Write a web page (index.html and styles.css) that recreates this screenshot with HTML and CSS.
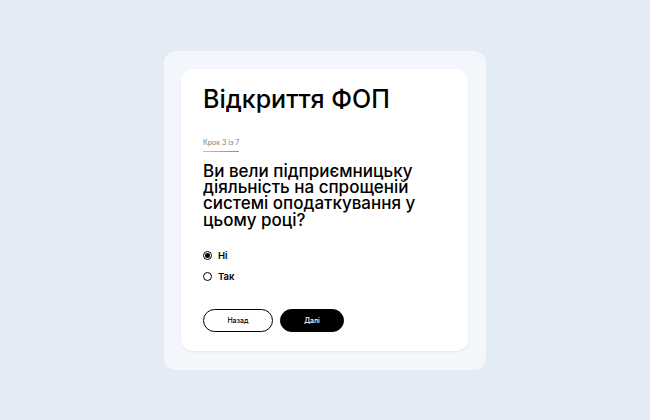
FILE: index.html
```html
<!DOCTYPE html>
<html lang="uk">
<head>
<meta charset="utf-8">
<link rel="stylesheet" href="styles.css">
</head>
<body>
<div class="page">
  <div class="panel">
    <div class="card">
      <h1 class="title">Відкриття ФОП</h1>
      <div class="step">Крок 3 із 7</div>
      <h2 class="question">Ви вели підприємницьку діяльність на спрощеній системі оподаткування у цьому році?</h2>
      <div class="options">
        <label class="option"><span class="radio checked"></span><span class="opt-label">Ні</span></label>
        <label class="option"><span class="radio"></span><span class="opt-label">Так</span></label>
      </div>
      <div class="actions">
        <button class="btn btn-outline">Назад</button>
        <button class="btn btn-solid">Далі</button>
      </div>
    </div>
  </div>
</div>
</body>
</html>
```
FILE: styles.css
```css
* { box-sizing: border-box; }
html, body { margin: 0; padding: 0; }
body {
  background: #e3ebf5;
  font-family: "Inter", "Noto Sans", sans-serif;
  color: #000;
}
.page {
  width: 650px;
  height: 420px;
  display: flex;
  align-items: center;
  justify-content: center;
}
.panel {
  width: 322px;
  height: 319px;
  background: #f3f6fb;
  border-radius: 12px;
  padding: 18px 18px 19px 17px;
}
.card {
  width: 287px;
  height: 282px;
  background: #fff;
  border-radius: 12px;
  box-shadow: 0 1px 2px rgba(30, 50, 90, 0.08);
  padding: 14px 22px 0 22px;
  display: flex;
  flex-direction: column;
}
.title {
  margin: 0;
  font-size: 25px;
  font-weight: 500;
  line-height: 32px;
  letter-spacing: 0;
}
.step {
  margin-top: 23px;
  font-size: 7px;
  color: #7a7a7a;
  line-height: 10px;
  padding-bottom: 4px;
  width: 36px;
  white-space: nowrap;
  background: linear-gradient(90deg, #9ad6cc, #62b6c4 60%, #6a9ad8) no-repeat left bottom / 100% 1px;
}
.question {
  margin: 11px 0 0 0;
  font-size: 17px;
  font-weight: 500;
  line-height: 16.4px;
}
.options {
  margin-top: 22px;
  display: flex;
  flex-direction: column;
  gap: 11px;
}
.option {
  display: flex;
  align-items: center;
  gap: 6px;
  height: 10px;
}
.radio {
  width: 9px;
  height: 9px;
  border: 1px solid #000;
  border-radius: 50%;
  display: flex;
  align-items: center;
  justify-content: center;
}
.radio.checked::after {
  content: "";
  width: 5px;
  height: 5px;
  border-radius: 50%;
  background: #000;
}
.opt-label {
  font-size: 9.5px;
  font-weight: 600;
}
.actions {
  margin-top: 28px;
  display: flex;
  gap: 7px;
}
.btn {
  font-family: inherit;
  font-size: 7px;
  font-weight: 500;
  height: 23px;
  border-radius: 12px;
  padding: 0;
  cursor: pointer;
}
.btn-outline {
  width: 70px;
  background: #fff;
  border: 1px solid #000;
  color: #000;
}
.btn-solid {
  width: 64px;
  background: #000;
  border: 1px solid #000;
  color: #fff;
}
```
